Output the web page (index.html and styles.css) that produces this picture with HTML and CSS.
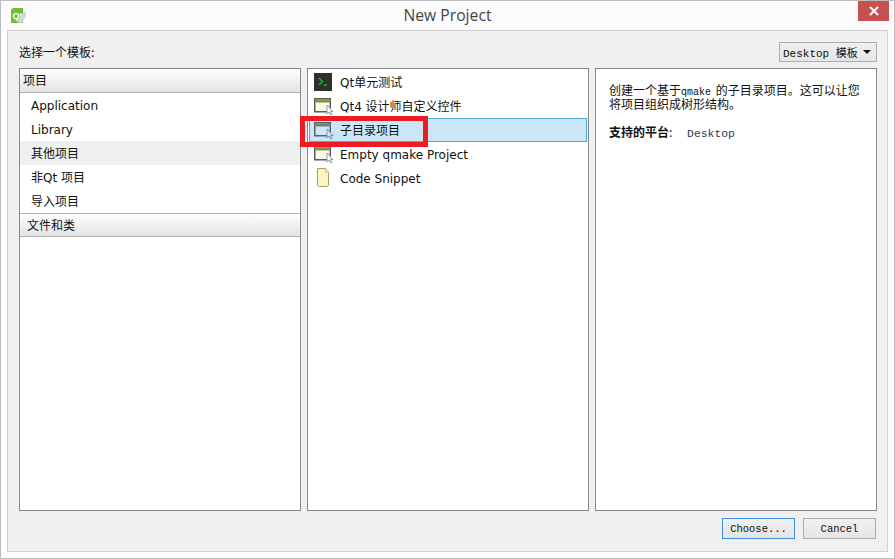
FILE: index.html
```html
<!DOCTYPE html>
<html lang="zh-CN">
<head>
    <meta charset="UTF-8">
    <title>New Project</title>
    <link rel="stylesheet" href="styles.css">
</head>
<body>
<div class="window">
    <!-- Title bar -->
    <div class="titlebar">
        <svg class="app-icon" width="18" height="18" viewBox="0 0 18 18">
            <path d="M2 1h10v15H0V3z" fill="#6fbf3a"/>
            <text x="1.500" y="12" class="qt-mark">Qt</text>
            <path d="M7 15c0-5 4-8 8-11 0 6-2 10-5 12-1 .5-3 0-3-1z" fill="#d4d4d4"/>
        </svg>
        <div class="title">New Project</div>
        <button class="close" type="button">
            <svg width="10" height="10" viewBox="0 0 10 10"><path d="M1 1l8 8M9 1l-8 8" stroke="#fff" stroke-width="2"/></svg>
        </button>
    </div>

    <div class="content">
        <div class="top-row">
            <span class="choose-label">选择一个模板:</span>
            <div class="combo"><span>Desktop 模板</span><i class="arrow"></i></div>
        </div>

        <div class="columns">
            <!-- Categories -->
            <div class="panel">
                <div class="cat-header first">项目</div>
                <div class="cat-item">Application</div>
                <div class="cat-item">Library</div>
                <div class="cat-item current">其他项目</div>
                <div class="cat-item">非Qt 项目</div>
                <div class="cat-item">导入项目</div>
                <div class="cat-header second">文件和类</div>
            </div>

            <!-- Templates -->
            <div class="panel templates">
                <div class="tpl">
                    <svg class="tpl-icon" width="20" height="20" viewBox="0 0 20 20">
                        <rect x="0" y="1" width="18" height="18" fill="#2f302c"/>
                        <path d="M5 6l3.500 3.500L5 13" fill="none" stroke="#12b81c" stroke-width="1.500"/>
                        <path d="M9.500 13h3.500" stroke="#12b81c" stroke-width="1.300"/>
                    </svg>
                    <span class="tpl-cjk">Qt单元测试</span>
                </div>
                <div class="tpl">
                    <svg class="tpl-icon" width="20" height="20" viewBox="0 0 20 20">
                        <rect x=".75" y="2.750" width="15.500" height="13" fill="#fbfbf0" stroke="#5c5c50" stroke-width="1.500"/>
                        <rect x="1.500" y="3.500" width="14" height="3" fill="#8a8a42"/>
                        <path d="M13 9v9l2-2 1.500 3 1.500-.8-1.500-2.700H19z" fill="#fff" stroke="#7b8794" stroke-width=".8"/>
                    </svg>
                    <span class="tpl-cjk">Qt4 设计师自定义控件</span>
                </div>
                <div class="tpl selected">
                    <svg class="tpl-icon" width="20" height="20" viewBox="0 0 20 20">
                        <rect x=".75" y="2.750" width="15.500" height="13" fill="#d3e6f5" stroke="#56626e" stroke-width="1.500"/>
                        <rect x="1.500" y="3.500" width="14" height="3" fill="#6f7f74"/>
                        <path d="M13 9v9l2-2 1.500 3 1.500-.8-1.500-2.700H19z" fill="#d3e6f5" stroke="#5c87ad" stroke-width=".8"/>
                    </svg>
                    <span class="tpl-cjk">子目录项目</span>
                </div>
                <div class="tpl">
                    <svg class="tpl-icon" width="20" height="20" viewBox="0 0 20 20">
                        <rect x=".75" y="2.750" width="15.500" height="13" fill="#fbfbf0" stroke="#5c5c50" stroke-width="1.500"/>
                        <rect x="1.500" y="3.500" width="14" height="3" fill="#8a8a42"/>
                        <path d="M13 9v9l2-2 1.500 3 1.500-.8-1.500-2.700H19z" fill="#fff" stroke="#7b8794" stroke-width=".8"/>
                    </svg>
                    <span class="tpl-latin">Empty qmake Project</span>
                </div>
                <div class="tpl">
                    <svg class="tpl-icon" width="20" height="20" viewBox="0 0 20 20">
                        <path d="M3.500.5h8l3 3.500v13c0 1-1 1.500-2 1.500H5.500c-1 0-2-.5-2-1.500z" fill="#fbf6c0" stroke="#a89c6c"/>
                        <path d="M11.500.5v4h3" fill="#fffde6" stroke="#c4b988" stroke-width=".8"/>
                    </svg>
                    <span class="tpl-latin">Code Snippet</span>
                </div>
                <!-- Red annotation drawn over the screenshot -->
                <div class="annotation"></div>
            </div>

            <!-- Description -->
            <div class="panel description">
                <p>创建一个基于<span class="mono qmake">qmake</span> 的子目录项目。这可以让您<br>将项目组织成树形结构。</p>
                <p class="platforms"><b>支持的平台</b>:&nbsp;<span class="mono desktop">Desktop</span></p>
            </div>
        </div>

        <div class="buttons">
            <button class="btn default" type="button">Choose...</button>
            <button class="btn" type="button">Cancel</button>
        </div>
    </div>
</div>
</body>
</html>
```

FILE: styles.css
```css
/* Basic Styling */
body {
    margin: 0;
    background-color: #fff;
    font-family: "DejaVu Sans", "Noto Sans CJK SC", sans-serif;
    font-size: 12px;
    color: #111;
}
.window {
    box-sizing: border-box;
    width: 895px;
    height: 559px;
    display: flex;
    flex-direction: column;
    background-color: #fcfcfc;
    border: 1px solid #bdbdbd;
    padding: 0 6px 6px 6px;
}

/* Title bar */
.titlebar {
    height: 29px;
    flex: none;
    display: flex;
    align-items: flex-start;
    justify-content: center;
    position: relative;
}
.app-icon {
    position: absolute;
    left: 4px;
    top: 6px;
}
.qt-mark {
    font-family: "Liberation Sans", sans-serif;
    font-size: 9px;
    font-weight: bold;
    fill: #fff;
}
.title {
    font-family: "Open Sans", sans-serif;
    font-size: 15.700px;
    line-height: 29px;
    color: #444;
}
.close {
    position: absolute;
    right: -1px;
    top: 0;
    width: 31px;
    height: 20px;
    padding: 0;
    border: none;
    background-color: #c75050;
    display: flex;
    align-items: center;
    justify-content: center;
}

/* Main area */
.content {
    flex: 1;
    display: flex;
    flex-direction: column;
    background-color: #f0f0f0;
    border: 1px solid #d0d0d0;
    padding: 11px 10px 12px 11px;
}
.top-row {
    height: 20px;
    display: flex;
    align-items: center;
    justify-content: space-between;
    margin-bottom: 6px;
}
.choose-label {
    font-family: "Noto Sans CJK SC", sans-serif;
    line-height: 18px;
}
.combo {
    box-sizing: border-box;
    width: 98px;
    height: 20px;
    display: flex;
    align-items: center;
    justify-content: space-between;
    padding: 0 5px 0 3px;
    border: 1px solid #acacac;
    background: linear-gradient(#f0f0f0, #e5e5e5);
    font-family: "Liberation Mono", "Noto Sans CJK SC", monospace;
    font-size: 11px;
}
.arrow {
    width: 0;
    height: 0;
    border-left: 4px solid transparent;
    border-right: 4px solid transparent;
    border-top: 4px solid #111;
}
.columns {
    flex: 1;
    display: flex;
    gap: 6px;
    min-height: 0;
}
.panel {
    box-sizing: border-box;
    width: 282px;
    background-color: #fff;
    border: 1px solid #828790;
}

/* Category list */
.cat-header {
    box-sizing: border-box;
    height: 24px;
    line-height: 25px;
    background: linear-gradient(#fdfdfd, #e4e4e4);
    border-bottom: 1px solid #b4b4b4;
}
.cat-header.first {
    padding-left: 3px;
}
.cat-header.second {
    padding-left: 7px;
    border-top: 1px solid #b4b4b4;
}
.cat-item {
    height: 24px;
    line-height: 26px;
    padding-left: 11px;
}
.cat-item.current {
    background-color: #f0f0f0;
}

/* Template list */
.templates {
    position: relative;
    padding: 1px;
}
.tpl {
    box-sizing: border-box;
    height: 24px;
    display: flex;
    align-items: center;
    gap: 6px;
    padding-left: 5px;
}
.tpl-icon {
    flex: none;
}
.tpl-cjk {
    margin-bottom: 2px;
}
.tpl-latin {
    margin-top: 2px;
}
.tpl.selected {
    background-color: #cbe6f5;
    border: 1px solid #4ba6de;
    padding-left: 4px;
}
.annotation {
    position: absolute;
    left: -8px;
    top: 47px;
    width: 128px;
    height: 31px;
    box-sizing: border-box;
    border: 5px solid #ed1c24;
}

/* Description */
.description {
    padding: 14px 13px;
    font-family: "Noto Sans CJK SC", sans-serif;
    line-height: 14px;
}
.description p {
    margin: 0;
}
.description .platforms {
    margin-top: 14px;
}
.mono {
    font-family: "Liberation Mono", monospace;
    font-size: 10px;
    line-height: 0;
}
.qmake {
    margin-right: 2px;
}
.desktop {
    font-size: 11.400px;
    color: #1f3b5c;
    margin-left: 12px;
}

/* Dialog buttons */
.buttons {
    display: flex;
    justify-content: flex-end;
    gap: 8px;
    margin-top: 7px;
    padding-right: 1px;
}
.btn {
    width: 73px;
    height: 21px;
    padding: 0;
    border: 1px solid #acacac;
    background: linear-gradient(#f0f0f0, #e5e5e5);
    font-family: "Liberation Mono", monospace;
    font-size: 10.500px;
    color: #111;
}
.btn.default {
    border-color: #3d8fe0;
}
```
